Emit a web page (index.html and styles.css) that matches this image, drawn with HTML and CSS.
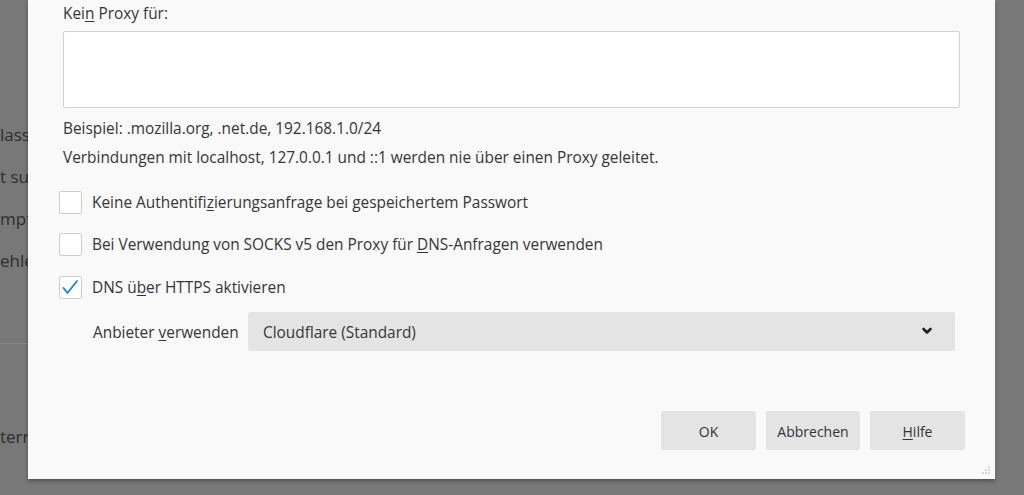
FILE: index.html
```html
<!DOCTYPE html>
<html lang="de">
<head>
<meta charset="utf-8">
<title>Verbindungs-Einstellungen</title>
<link rel="stylesheet" href="styles.css">
</head>
<body>
<div class="backdrop">
  <div class="bg-text">
    <div class="bg-line l1">lass</div>
    <div class="bg-line l2">t su</div>
    <div class="bg-line l3">mpfe</div>
    <div class="bg-line l4">ehle</div>
    <div class="bg-rule"></div>
    <div class="bg-line l5">tern</div>
  </div>

  <div class="dialog">
    <div class="field-label">Kei<u>n</u> Proxy für:</div>
    <div class="textarea"></div>
    <div class="hint first">Beispiel: .mozilla.org, .net.de, 192.168.1.0/24</div>
    <div class="hint second">Verbindungen mit localhost, 127.0.0.1 und ::1 werden nie über einen Proxy geleitet.</div>

    <div class="check-row r1">
      <span class="box"></span>
      <span class="check-text">Keine Authentifi<u>z</u>ierungsanfrage bei gespeichertem Passwort</span>
    </div>
    <div class="check-row r2">
      <span class="box"></span>
      <span class="check-text">Bei Verwendung von SOCKS v5 den Proxy für <u>D</u>NS-Anfragen verwenden</span>
    </div>
    <div class="check-row r3">
      <span class="box">
        <svg class="tick" width="22" height="22" viewBox="0 0 22 22"><polyline points="4.5,12 8.5,17 18,5" fill="none" stroke="#1a82d4" stroke-width="1.8" stroke-linecap="round" stroke-linejoin="round"/></svg>
      </span>
      <span class="check-text">DNS ü<u>b</u>er HTTPS aktivieren</span>
    </div>

    <div class="provider-row">
      <span class="provider-label">Anbieter <u>v</u>erwenden</span>
      <div class="select">
        <span class="select-value">Cloudflare (Standard)</span>
        <svg class="chevron" width="12" height="8" viewBox="0 0 12 8"><polyline points="2.5,2 6,5.5 9.5,2" fill="none" stroke="#222" stroke-width="2.6" stroke-linecap="round" stroke-linejoin="round"/></svg>
      </div>
    </div>

    <div class="buttons">
      <div class="btn btn-ok">OK</div>
      <div class="btn btn-cancel">Abbrechen</div>
      <div class="btn btn-help"><u>H</u>ilfe</div>
    </div>

    <svg class="grip" width="10" height="10" viewBox="0 0 10 10">
      <rect x="7" y="1" width="2" height="2" fill="#d6d6d6"/>
      <rect x="4" y="4" width="2" height="2" fill="#d6d6d6"/>
      <rect x="7" y="4" width="2" height="2" fill="#d6d6d6"/>
      <rect x="1" y="7" width="2" height="2" fill="#d6d6d6"/>
      <rect x="4" y="7" width="2" height="2" fill="#d6d6d6"/>
      <rect x="7" y="7" width="2" height="2" fill="#d6d6d6"/>
    </svg>
  </div>
</div>
</body>
</html>
```

FILE: styles.css
```css
html, body {
  margin: 0;
  padding: 0;
}

body {
  width: 1024px;
  height: 495px;
  overflow: hidden;
  background: #787878;
  font-family: "Open Sans", "Noto Sans", "DejaVu Sans", sans-serif;
  font-size: 15.4px;
  color: #363636;
}

.backdrop {
  position: relative;
  width: 1024px;
  height: 495px;
  background: #787878;
}

.bg-text {
  display: flex;
  flex-direction: column;
  padding-top: 124px;
  color: #2e2e2e;
  font-size: 17px;
}

.bg-line {
  height: 22px;
  line-height: 22px;
  white-space: nowrap;
}

.bg-line.l2 { margin-top: 20px; }
.bg-line.l3 { margin-top: 20px; }
.bg-line.l4 { margin-top: 20px; }

.bg-rule {
  margin-top: 71px;
  height: 1px;
  width: 40px;
  background: #888888;
}

.bg-line.l5 { margin-top: 82px; }

.dialog {
  position: absolute;
  left: 28px;
  top: 0;
  width: 967px;
  height: 479px;
  box-sizing: border-box;
  background: #f9f9f9;
  box-shadow: 0 2px 4px rgba(0, 0, 0, 0.35), 1px 0 0 #8a8a8a;
  padding: 0 35px;
  display: flex;
  flex-direction: column;
}

u {
  text-decoration: underline;
  text-underline-offset: 2px;
  text-decoration-thickness: 1px;
}

.field-label {
  margin-top: 4px;
  height: 20px;
  line-height: 20px;
}

.textarea {
  margin-top: 7px;
  height: 77px;
  box-sizing: border-box;
  background: #ffffff;
  border: 1px solid #d2d2d2;
  border-radius: 2px;
}

.hint {
  height: 20px;
  line-height: 20px;
}

.hint.first { margin-top: 11px; }
.hint.second { margin-top: 9px; }

.check-row {
  display: flex;
  align-items: center;
  height: 24px;
  margin-left: -4px;
}

.check-row.r1 { margin-top: 22px; }
.check-row.r2 { margin-top: 18px; }
.check-row.r3 { margin-top: 19px; }

.box {
  width: 23px;
  height: 23px;
  box-sizing: border-box;
  border: 1px solid #cdcdcd;
  border-radius: 2px;
  background: #ffffff;
  flex: none;
  position: relative;
}

.tick {
  position: absolute;
  left: -1px;
  top: -1px;
}

.check-text {
  margin-left: 10px;
  line-height: 20px;
  padding-top: 2px;
}

.provider-row {
  display: flex;
  align-items: center;
  margin-top: 13px;
  padding-left: 30px;
  padding-right: 5px;
  height: 39px;
}

.provider-label {
  flex: none;
  width: 155px;
  padding-top: 2px;
}

.select {
  flex: 1;
  height: 39px;
  background: #e4e4e4;
  display: flex;
  align-items: center;
  justify-content: space-between;
  padding: 2px 22px 0 15px;
  box-sizing: border-box;
  border-radius: 2px;
}

.select-value {
  color: #363636;
}

.chevron {
  margin-top: -4px;
}

.buttons {
  margin-top: auto;
  margin-right: -5px;
  padding-bottom: 29px;
  display: flex;
  justify-content: flex-end;
  gap: 10px;
}

.btn {
  width: 95px;
  height: 39px;
  box-sizing: border-box;
  background: #e4e4e4;
  border-radius: 2px;
  display: flex;
  align-items: center;
  justify-content: center;
  padding-top: 1px;
  color: #333;
  font-size: 14px;
}

.btn-cancel { width: 94px; }

.grip {
  position: absolute;
  right: 4px;
  bottom: 4px;
}
```
